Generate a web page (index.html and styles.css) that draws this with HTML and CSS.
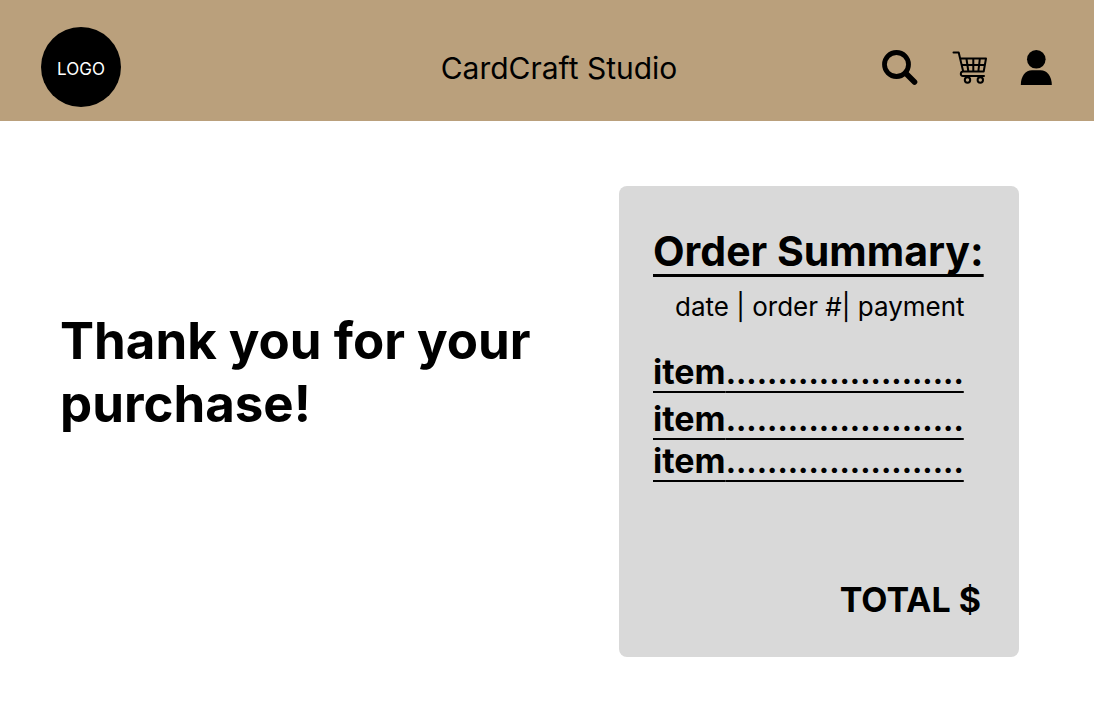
FILE: index.html
```html
<!DOCTYPE html>
<html lang="en">
<head>
<meta charset="utf-8">
<meta name="viewport" content="width=device-width, initial-scale=1">
<title>CardCraft Studio</title>
<link rel="stylesheet" href="styles.css">
</head>
<body>
<header class="site-header">
  <a class="logo" href="#">LOGO</a>
  <p class="brand">CardCraft Studio</p>
  <nav class="actions" aria-label="Shop">
    <button class="icon-button" type="button" aria-label="Search">
      <svg width="36" height="36" viewBox="0 0 36 36" fill="none" stroke="#000" stroke-linecap="round">
        <circle cx="14.5" cy="14.5" r="12" stroke-width="4.8"/>
        <path d="M23.5 23 32.500 32" stroke-width="5.6"/>
      </svg>
    </button>
    <button class="icon-button" type="button" aria-label="Cart">
      <svg width="36" height="36" viewBox="0 0 36 36" fill="none" stroke="#000" stroke-width="2" stroke-linecap="round" stroke-linejoin="round">
        <path d="M2.500 2.500H7.700L12.200 21.500M9.500 8.500H35L32.700 21.500H12.500C9 21.500 9 26 12 26H33M10.700 15H33.700M15.500 9 17.300 21M22.300 9V21M28.800 9 27.400 21"/>
        <circle cx="16.500" cy="30" r="2.700"/>
        <circle cx="29.300" cy="30" r="2.700"/>
      </svg>
    </button>
    <button class="icon-button" type="button" aria-label="Account">
      <svg width="32" height="36" viewBox="0 0 32 36">
        <circle cx="16.300" cy="9.300" r="9.300"/>
        <path d="M.8 35C.8 26 5.500 20.200 12 20.200h8.500c6.500 0 11.300 5.800 11.300 14.800z"/>
      </svg>
    </button>
  </nav>
</header>
<main class="page">
  <h1 class="thanks">Thank you for your purchase!</h1>
  <section class="summary" aria-labelledby="summary-title">
    <h2 class="summary-title" id="summary-title">Order Summary:</h2>
    <p class="meta">date | order #| payment</p>
    <ul class="items">
      <li>item<span class="leader">.......................</span></li>
      <li>item<span class="leader">.......................</span></li>
      <li>item<span class="leader">.......................</span></li>
    </ul>
    <p class="total">TOTAL $</p>
  </section>
</main>
</body>
</html>
```
FILE: styles.css
```css
* {
  box-sizing: border-box;
  margin: 0;
  padding: 0;
}

body {
  background: #fff;
  color: #000;
  font-family: Inter, "Liberation Sans", sans-serif;
}

.site-header {
  display: grid;
  grid-template-columns: 1fr auto 1fr;
  align-items: center;
  padding: 27px 42px 14px 41px;
  background: #baa07c;
}

.logo {
  display: flex;
  align-items: center;
  justify-content: center;
  width: 80px;
  height: 80px;
  padding-top: 3px;
  border-radius: 50%;
  background: #000;
  color: #fff;
  font-size: 17px;
  text-decoration: none;
}

.brand {
  padding-top: 2px;
  padding-left: 25px;
  font-size: 30px;
  line-height: 38px;
}

.actions {
  display: flex;
  justify-content: flex-end;
  gap: 33px;
  padding-top: 2px;
}

.icon-button {
  display: flex;
  border: 0;
  background: none;
  cursor: pointer;
}

.page {
  display: grid;
  grid-template-columns: 1fr 400px;
  align-items: start;
  gap: 64px;
  padding: 65px 75px 53px 60px;
}

.thanks {
  padding-top: 123px;
  font-size: 51px;
  line-height: 63px;
  font-weight: 700;
}

.summary {
  padding: 40px 38px 36px 34px;
  border-radius: 8px;
  background: #d9d9d9;
}

.summary-title {
  font-size: 41px;
  line-height: 51px;
  text-decoration: underline;
  text-decoration-thickness: 3px;
  text-decoration-skip-ink: none;
  text-underline-offset: 8px;
  white-space: nowrap;
}

.meta {
  margin-top: 14px;
  padding-left: 22px;
  font-size: 26px;
  line-height: 32px;
}

.items {
  margin-top: 28px;
  font-size: 34px;
  line-height: 41px;
  font-weight: 700;
  list-style: none;
}

.items li {
  text-decoration: underline;
  text-decoration-thickness: 2px;
  text-decoration-skip-ink: none;
  text-underline-offset: 7px;
  white-space: nowrap;
}

.items li:first-child {
  margin-bottom: 5px;
}

.leader {
  font-size: 31px;
}

.total {
  margin-top: 97px;
  font-size: 34px;
  line-height: 42px;
  font-weight: 700;
  text-align: right;
}
```
